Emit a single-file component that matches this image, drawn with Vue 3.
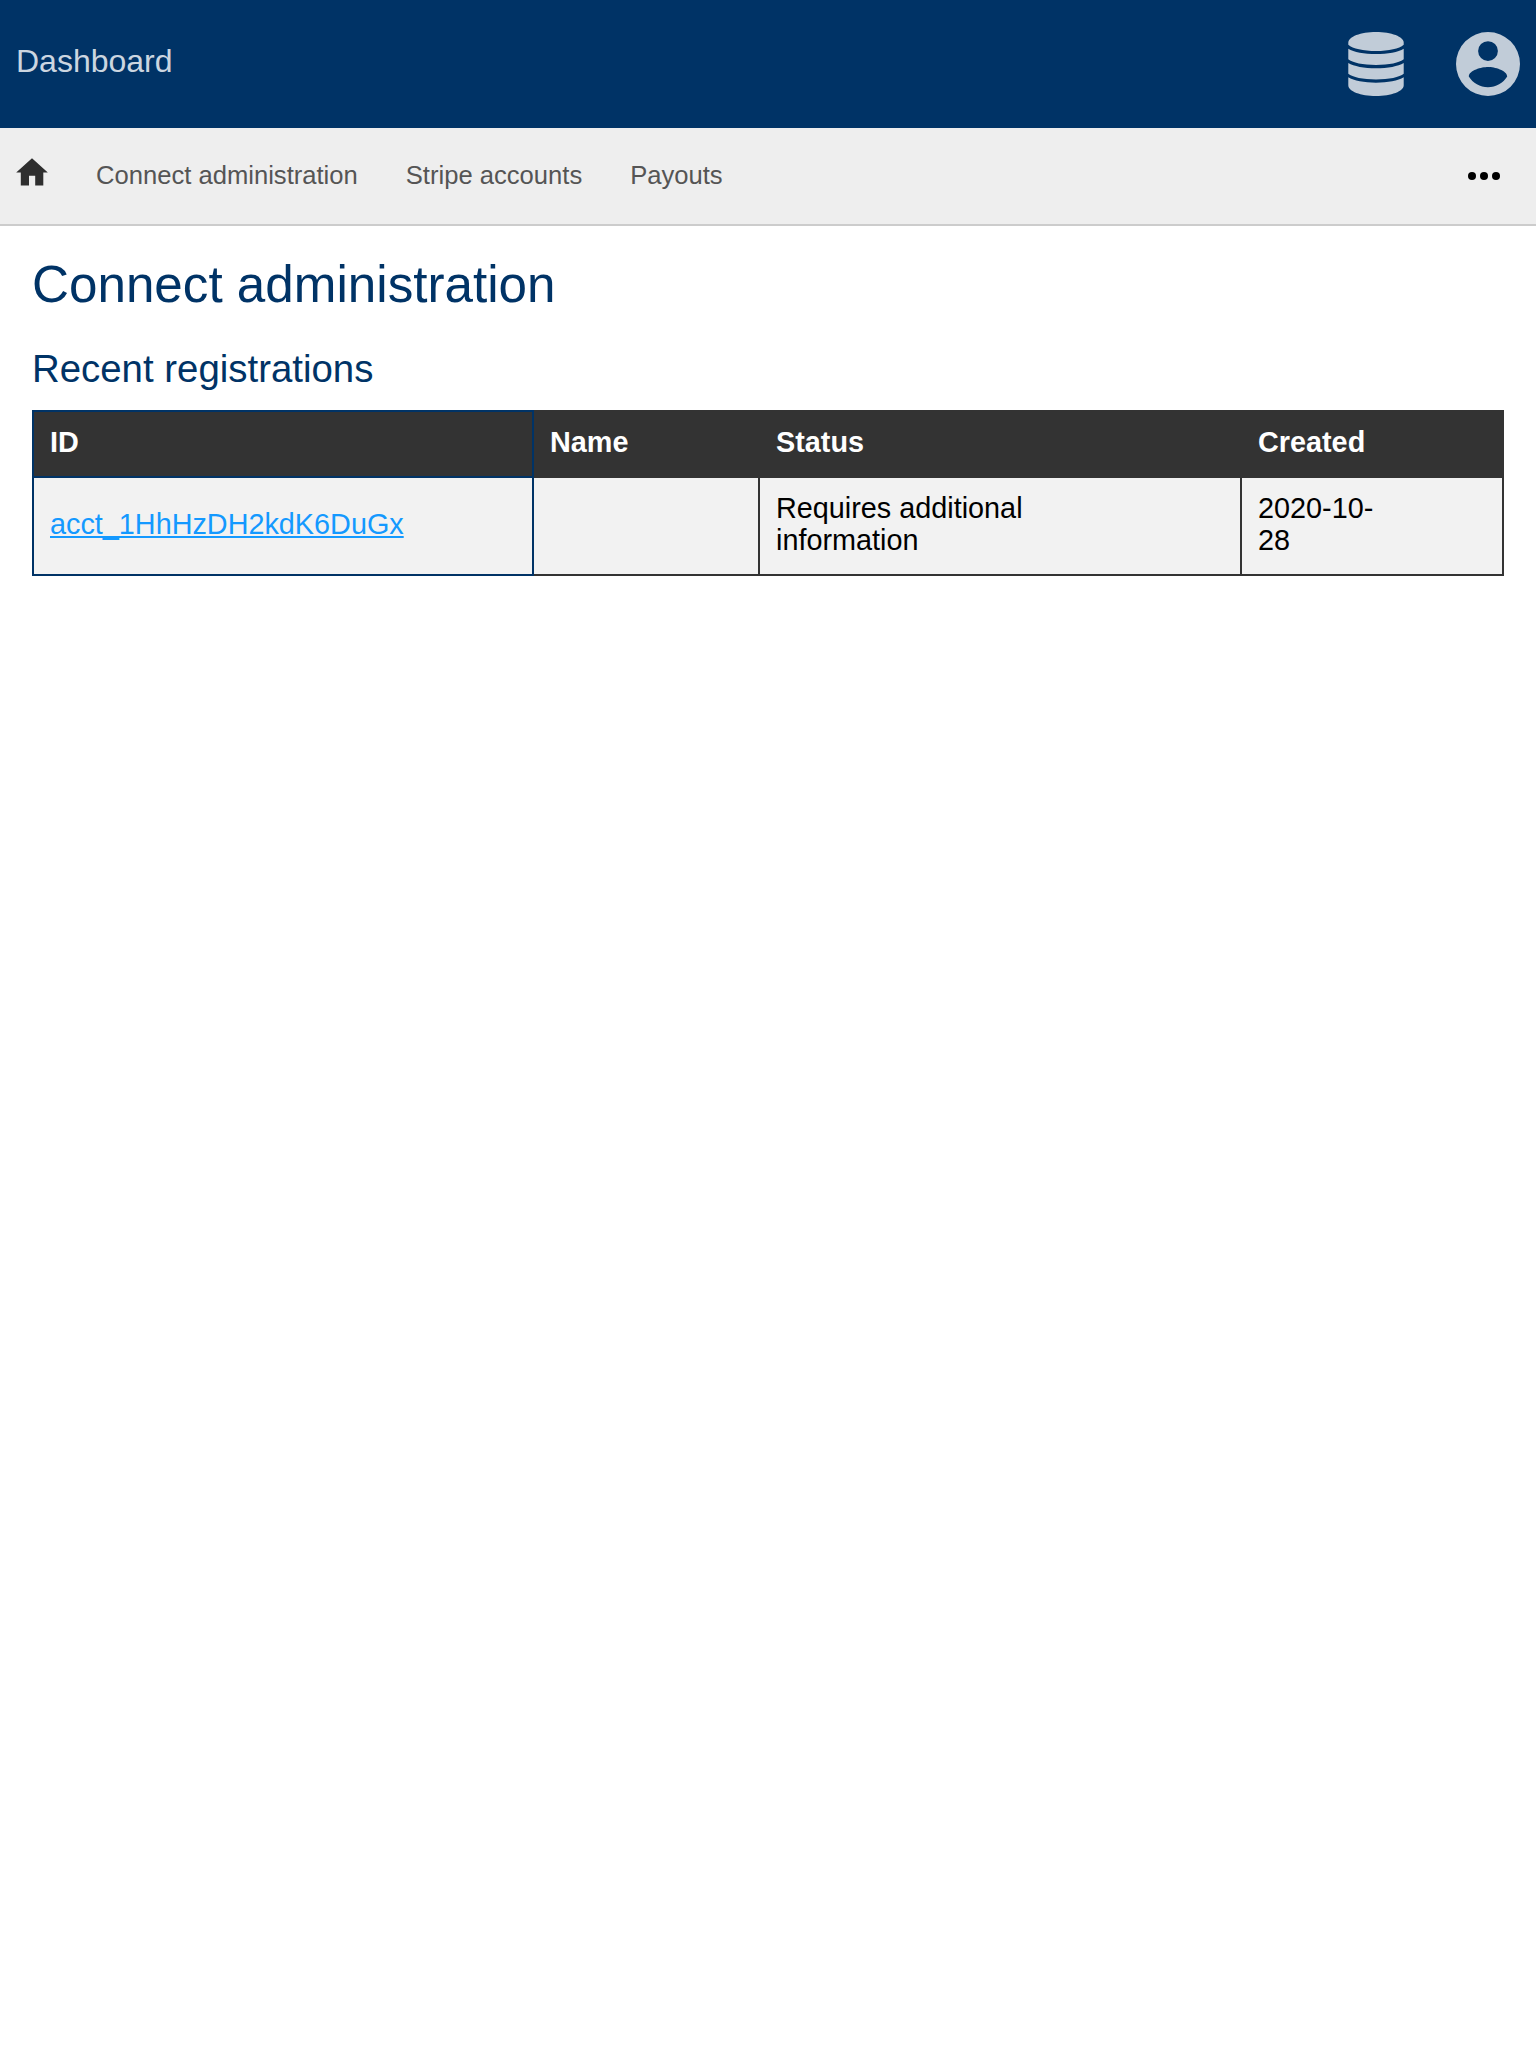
<script setup>
const links = ['Connect administration', 'Stripe accounts', 'Payouts']
const columns = ['ID', 'Name', 'Status', 'Created']
const rows = [
  { id: 'acct_1HhHzDH2kdK6DuGx', name: '', status: 'Requires additional\ninformation', created: '2020-10-\n28' },
]
</script>

<template>
  <div class="page">
    <header class="topbar">
      <a class="brand">Dashboard</a>
      <div class="actions">
        <svg class="database" viewBox="-0.3 0 56.6 64" preserveAspectRatio="none">
          <path d="M0 10.7C0 4.6 12.5 0 28 0s28 4.6 28 10.7v2C51.500 16.600 41 19 28 19S4.500 16.600 0 12.700z" />
          <path d="M0 16.700C5.500 20 16 22 28 22s22.500-2 28-5.300v10.600C52 30.800 41 33 28 33S4 30.800 0 27.300z" />
          <path d="M0 31C5.500 34.300 16 36.300 28 36.300s22.500-2 28-5.300v10.700C52 45.200 41 47.400 28 47.400S4 45.200 0 41.700z" />
          <path d="M0 45.300C5.500 48.700 16 50.700 28 50.700s22.500-2 28-5.400v8C56 59.400 43.500 64 28 64S0 59.400 0 53.300z" />
        </svg>
        <svg class="account" viewBox="0 0 64 64">
          <path fill-rule="evenodd" d="M32 0a32 32 0 1 0 0 64 32 32 0 0 0 0-64zm0 9.200a9.900 9.900 0 1 1 0 19.800 9.900 9.900 0 0 1 0-19.800zM32 55.200c-8 0-15.200-4.200-19.200-10.700.1-6.400 12.800-9.600 19.200-9.600s19.100 3.200 19.200 9.600C47.200 51 40 55.200 32 55.200z" />
        </svg>
      </div>
    </header>
    <nav class="menu">
      <svg class="home" viewBox="0 0 32 28"><path d="M16 .3 .2 14.400h4.600V27.600h8.200V17.800h6.200v9.800h8.100V14.400h4.500z" /></svg>
      <a v-for="link in links" :key="link" class="link">{{ link }}</a>
      <svg class="more" viewBox="0 0 32 8"><circle cx="4" cy="4" r="4" /><circle cx="16" cy="4" r="4" /><circle cx="28" cy="4" r="4" /></svg>
    </nav>
    <main class="content">
      <h1>Connect administration</h1>
      <h2>Recent registrations</h2>
      <table>
        <colgroup><col class="c-id" /><col class="c-name" /><col class="c-status" /><col class="c-created" /></colgroup>
        <thead>
          <tr><th v-for="c in columns" :key="c">{{ c }}</th></tr>
        </thead>
        <tbody>
          <tr v-for="row in rows" :key="row.id">
            <td><a class="id">{{ row.id }}</a></td>
            <td>{{ row.name }}</td>
            <td>{{ row.status }}</td>
            <td>{{ row.created }}</td>
          </tr>
        </tbody>
      </table>
    </main>
  </div>
</template>

<style>
body { margin: 0; background: #fff; }
</style>

<style scoped>
.page { min-height: 2048px; font-family: "Liberation Sans", Arial, sans-serif; color: #000; }
.topbar { box-sizing: border-box; height: 128px; padding: 0 16px; background: #036; display: flex; justify-content: space-between; align-items: center; }
.brand { font-size: 32px; line-height: 36px; padding-bottom: 6px; color: #ccd6e0; }
.actions { display: flex; gap: 52px; fill: #c1ccd8; }
.database { width: 56px; height: 64px; }
.account { width: 64px; height: 64px; }
.menu { box-sizing: border-box; height: 98px; padding: 0 36px 0 16px; background: #eee; border-bottom: 2px solid #ccc; display: flex; align-items: center; }
.home { width: 32px; height: 28px; margin-bottom: 8px; fill: #2e2e2e; }
.link { margin-left: 48px; padding-bottom: 2px; font-size: 25.6px; line-height: 30px; color: #555; }
.more { width: 32px; height: 8px; margin-left: auto; }
.content { padding: 29px 32px 0; }
h1 { margin: 0; font-size: 51.2px; line-height: 60px; font-weight: 400; color: #036; }
h2 { margin: 33px 0 20px; font-size: 38.4px; line-height: 42px; font-weight: 400; color: #036; }
table { width: 1472px; table-layout: fixed; border-collapse: separate; border-spacing: 0; font-size: 28.8px; line-height: 32px; border-left: 2px solid #036; }
.c-id { width: 500px; }
.c-name { width: 226px; }
.c-status { width: 482px; }
.c-created { width: 262px; }
th, td { padding: 14px 16px 18px; text-align: left; vertical-align: middle; white-space: pre-line; border-right: 2px solid #333; border-bottom: 2px solid #333; }
th { background: #333; color: #fff; border-top: 2px solid #333; }
td { background: #f2f2f2; }
th:first-child, td:first-child { border-color: #036; }
.id { color: #1499ff; text-decoration: underline; }
</style>
